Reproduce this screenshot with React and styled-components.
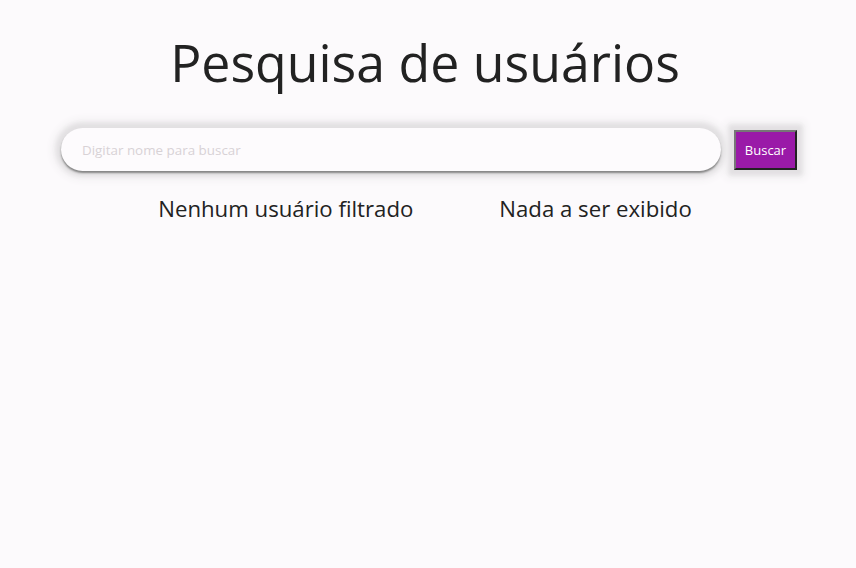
import React from 'react';
import styled, { createGlobalStyle } from 'styled-components';

const GlobalStyle = createGlobalStyle`
  html, body {
    margin: 0;
    padding: 0;
    background: #fcfafc;
    font-family: 'Open Sans', 'Noto Sans', sans-serif;
    color: #222;
  }
`;

function App() {
  const [search, setSearch] = React.useState('');

  return (
    <Page>
      <GlobalStyle />
      <Title>Pesquisa de usuários</Title>
      <SearchBar>
        <SearchInput
          placeholder="Digitar nome para buscar"
          value={search}
          onChange={(e) => setSearch(e.target.value)}
        />
        <SearchButton>Buscar</SearchButton>
      </SearchBar>
      <Results>
        <ResultText>Nenhum usuário filtrado</ResultText>
        <ResultText>Nada a ser exibido</ResultText>
      </Results>
    </Page>
  );
}

const Page = styled.div`
  display: flex;
  flex-direction: column;
  align-items: center;
  padding-top: 27px;
  min-height: 568px;
  box-sizing: border-box;
`;

const Title = styled.h1`
  margin: 0 6px 0 0;
  font-size: 51.8px;
  font-weight: 400;
  line-height: 70px;
  color: #222;
`;

const SearchBar = styled.div`
  display: flex;
  align-items: center;
  gap: 13px;
  margin-top: 31px;
  padding-left: 2px;
`;

const SearchInput = styled.input`
  width: 660px;
  height: 43px;
  box-sizing: border-box;
  border: none;
  border-radius: 22px;
  padding: 0 21px;
  background: #fdfbfd;
  font-family: 'Open Sans', sans-serif;
  font-size: 13.4px;
  color: #333;
  outline: none;
  box-shadow: 0 2px 2px #858585, 0 0 4px 5px #e2e0e2, 0 0 8px 8px #efedef;
  &::placeholder {
    color: #d8d2d6;
  }
`;

const SearchButton = styled.button`
  width: 63px;
  height: 40px;
  background: #9a1aa8;
  color: #fff;
  border: 2px solid #222;
  border-top-color: #777;
  border-left-color: #777;
  font-family: 'Open Sans', sans-serif;
  font-size: 13px;
  box-shadow: 0 0 4px 5px #e2e0e2, 0 0 8px 8px #efedef;
  cursor: pointer;
`;

const Results = styled.div`
  display: flex;
  gap: 86px;
  margin: 23px 6px 0 0;
`;

const ResultText = styled.p`
  margin: 0;
  font-size: 22.2px;
  line-height: 30px;
  color: #222;
`;

export default App;
